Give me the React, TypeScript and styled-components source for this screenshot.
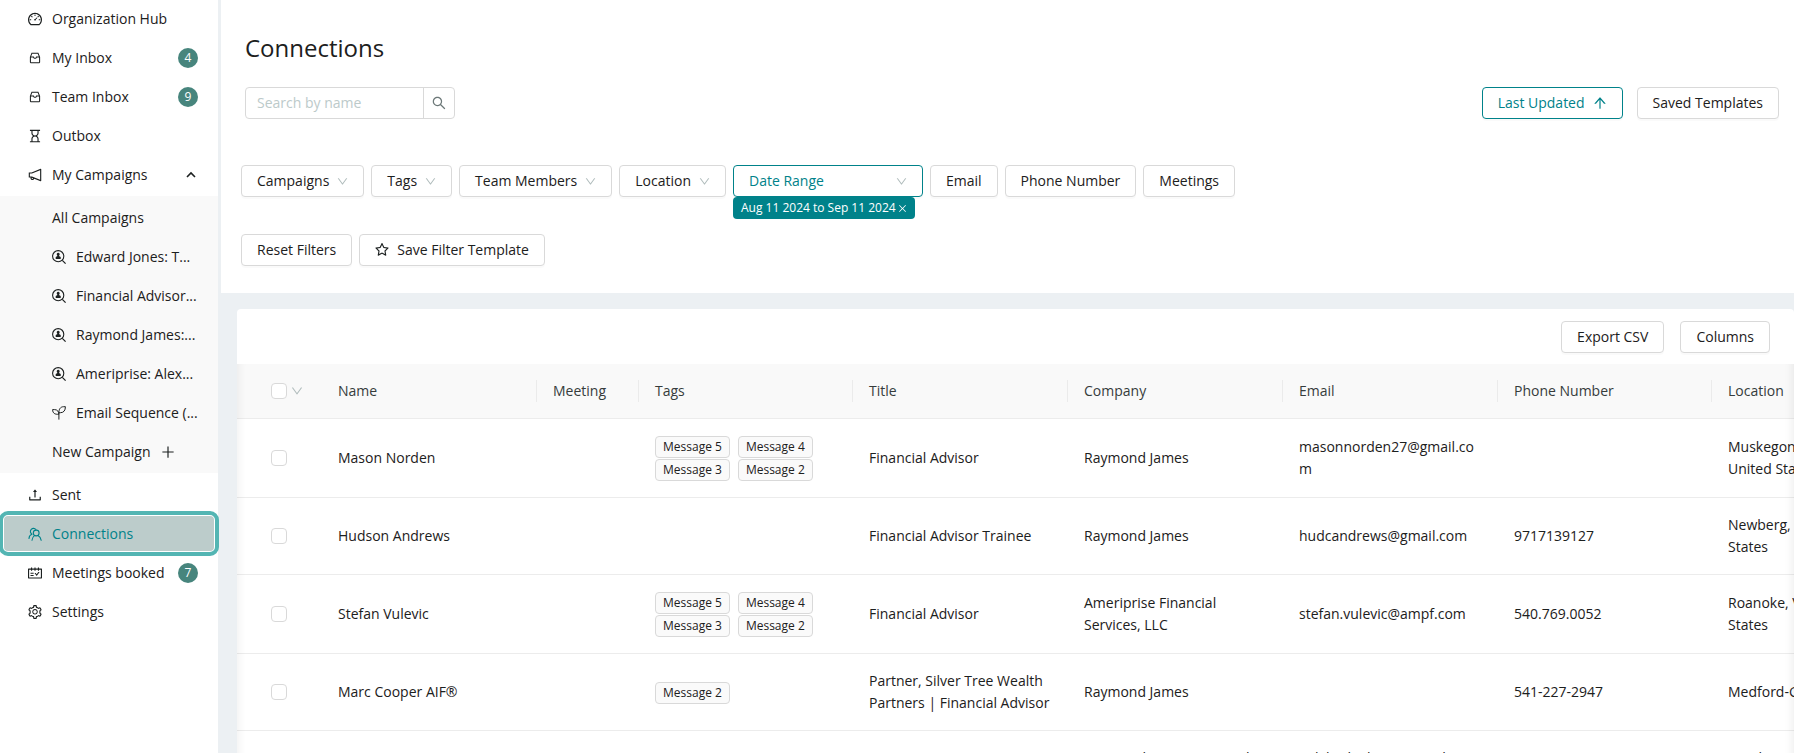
import React from "react";
import styled, { createGlobalStyle, css } from "styled-components";
import {
  AiOutlineDashboard, AiOutlineInbox, AiOutlineHourglass, AiOutlineNotification, AiOutlinePlus,
  AiOutlineUpload, AiOutlineSchedule, AiOutlineSetting, AiOutlineSearch, AiOutlineStar,
  AiOutlineArrowUp, AiOutlineDown, AiOutlineClose,
} from "react-icons/ai";

const teal = "#00828a";
const ink = "#1c2020";
const line = "#d9d9d9";

const GlobalStyle = createGlobalStyle`
  *, *::before, *::after { box-sizing: border-box; }
  body {
    margin: 0;
    color: ${ink};
    background: #ecf0f3;
    font: 14px/22px "Open Sans", "Noto Sans", sans-serif;
  }
  button, input { font: inherit; color: inherit; }
`;

const Shell = styled.div`
  display: flex;
  height: 100vh;
  overflow: hidden;
`;

const Sidebar = styled.nav`
  flex: 0 0 218px;
  padding-top: 1px;
  background: #fff;
`;

const itemLayout = css`
  display: flex;
  align-items: center;
  gap: 10px;
  height: 35px;
  margin: 0 4px 4px;
  padding: 0 16px 0 24px;
  border-radius: 4px;
`;

const NavItem = styled.a<{ $active?: boolean }>`
  ${itemLayout}
  color: ${(p) => (p.$active ? teal : ink)};
  text-decoration: none;
  white-space: nowrap;
  ${(p) =>
    p.$active &&
    css`
      background: #bccccb;
      outline: 4px solid #53b5b3;
      outline-offset: 1px;
    `}
`;

const NavToggle = styled.button`
  ${itemLayout}
  width: calc(100% - 8px);
  padding-right: 18px;
  border: 0;
  background: none;
  text-align: left;
`;

const IconSlot = styled.span`
  display: flex;
  flex: none;
  align-items: center;
  justify-content: center;
  width: 14px;
  height: 14px;
`;

const ItemText = styled.span<{ $hug?: boolean }>`
  flex: ${(p) => (p.$hug ? "none" : "1")};
`;

const SubMenu = styled.div`
  display: flow-root;
  margin-bottom: 4px;
  padding-top: 4px;
  background: #f9f9f9;
  a { padding-left: 48px; }
`;

const Badge = styled.span`
  width: 20px;
  height: 20px;
  border-radius: 10px;
  background: #47857d;
  color: #fff;
  font-size: 12px;
  line-height: 20px;
  text-align: center;
`;

const Main = styled.main`
  flex: 1;
  min-width: 0;
  padding-left: 3px;
  overflow: auto;
  scrollbar-width: none;
`;

const Filters = styled.header`
  padding: 32px 15px 27px 20px;
  background: #fff;
`;

const Title = styled.h1`
  margin: 0 4px;
  font-size: 24px;
  line-height: 32px;
  font-weight: 400;
`;

const TopRow = styled.div`
  display: flex;
  justify-content: space-between;
  margin: 23px 0 46px 4px;
`;

const ButtonRow = styled.div<{ $gap: number }>`
  display: flex;
  align-items: flex-start;
  gap: ${(p) => p.$gap}px;
`;

const FilterStack = styled.div`
  display: grid;
  gap: 37px;
`;

const Search = styled.form`
  display: flex;
  width: 210px;
  height: 32px;
  border: 1px solid ${line};
  border-radius: 4px;
`;

const SearchInput = styled.input`
  flex: 1;
  min-width: 0;
  padding: 0 11px;
  border: 0;
  outline: 0;
  background: none;
  &::placeholder { color: #bccaca; opacity: 1; }
`;

const SearchButton = styled.button`
  display: flex;
  align-items: center;
  justify-content: center;
  width: 31px;
  padding: 0;
  border: 0;
  border-left: 1px solid ${line};
  background: none;
  color: #6c7878;
`;

const Button = styled.button<{ $active?: boolean; $wide?: boolean }>`
  display: inline-flex;
  align-items: center;
  justify-content: ${(p) => (p.$wide ? "space-between" : "center")};
  gap: 8px;
  width: ${(p) => (p.$wide ? "190px" : "auto")};
  height: 32px;
  padding: 0 15px;
  border: 1px solid ${(p) => (p.$active ? teal : line)};
  border-radius: 4px;
  background: #fff;
  color: ${(p) => (p.$active ? teal : ink)};
  box-shadow: 0 2px 0 rgba(0, 0, 0, 0.02);
  white-space: nowrap;
`;

/* The icon set keeps a margin round each glyph; this view box trims it. */
const trimmed = "64 64 896 896";

const Caret = styled(AiOutlineDown).attrs({ viewBox: trimmed })`
  color: #b0bcbc;
`;

const DateFilter = styled.div`
  position: relative;
`;

const DateTag = styled.button`
  position: absolute;
  top: 100%;
  left: 0;
  display: flex;
  align-items: center;
  gap: 2px;
  height: 22px;
  padding: 0 8px;
  border: 0;
  border-radius: 4px;
  background: ${teal};
  color: #fff;
  font-size: 12px;
  line-height: 22px;
  font-weight: 500;
  white-space: nowrap;
`;

const Card = styled.section`
  margin: 16px 0 0 16px;
  border-radius: 4px 4px 0 0;
  background: #fff;
`;

const Toolbar = styled.div`
  display: flex;
  justify-content: flex-end;
  gap: 16px;
  padding: 12px 24px 11px;
`;

const TableFrame = styled.div`
  position: relative;
  &::before, &::after {
    content: "";
    position: absolute;
    top: 0;
    bottom: 0;
    width: 10px;
    pointer-events: none;
  }
  &::before { left: 0; box-shadow: inset 10px 0 8px -8px rgba(0, 0, 0, 0.06); }
  &::after { right: 0; box-shadow: inset -10px 0 8px -8px rgba(0, 0, 0, 0.07); }
`;

const Scroller = styled.div`
  overflow-x: auto;
  scrollbar-width: none;
`;

const Table = styled.table`
  table-layout: fixed;
  width: 1690px;
  min-width: 100%;
  border-collapse: separate;
  border-spacing: 0;
`;

const Col = styled.col<{ $w: number }>`
  width: ${(p) => p.$w}px;
`;

const HeadCell = styled.th<{ $divider?: boolean }>`
  padding: 16px;
  border-bottom: 1px solid #ececec;
  background: ${(p) =>
    p.$divider
      ? "linear-gradient(#ebebeb, #ebebeb) right center / 1px 22px no-repeat #f9f9f9"
      : "#f9f9f9"};
  color: #363c3c;
  font-weight: 400;
  text-align: left;
`;

const Cell = styled.td`
  padding: 16px;
  border-bottom: 1px solid #ececec;
  overflow-wrap: anywhere;
  vertical-align: middle;
`;

const CheckWrap = styled.div`
  display: flex;
  align-items: center;
  gap: 4px;
  padding-left: 18px;
`;

const Checkbox = styled.input.attrs({ type: "checkbox" })`
  appearance: none;
  flex: none;
  width: 16px;
  height: 16px;
  margin: 0;
  border: 1px solid ${line};
  border-radius: 4px;
  background: #fff;
`;

const TagList = styled.div`
  display: flex;
  flex-wrap: wrap;
  gap: 1px 8px;
  padding-top: 1px;
`;

const Tag = styled.span`
  height: 22px;
  padding: 0 7px;
  border: 1px solid ${line};
  border-radius: 4px;
  background: #fafafa;
  font-size: 12px;
  line-height: 20px;
  white-space: nowrap;
`;

const PersonSearchIcon = () => (
  <svg width="14" height="14" viewBox="0 0 14 14" fill="none" stroke="currentColor" aria-hidden="true">
    <circle cx="6.2" cy="6.2" r="5.6" strokeWidth="1.1" />
    <path d="M10.3 10.3 13.6 13.6" strokeWidth="1.2" />
    <path d="M6.2 2.800a1.500 1.500 0 0 1 1 2.600l-.2.600 1.700 1v1.900H3.700V7l1.700-1-.2-.6a1.500 1.500 0 0 1 1-2.600Z" fill="currentColor" stroke="none" />
  </svg>
);

const SproutIcon = () => (
  <svg width="14" height="14" viewBox="0 0 14 14" fill="none" stroke="currentColor" strokeLinejoin="round" aria-hidden="true">
    <path d="M.6 3.600H2.600C5.200 3.600 6.800 5.400 6.900 8.200 3 8.700 .6 7.200 .6 3.600Z" />
    <path d="M13.400 .7H11.600C8.400 .7 6.900 3.200 6.900 6.700H8.400C11.800 6.700 13.400 4.400 13.400 .7Z" />
    <path d="M6.900 6.700V13.600" />
  </svg>
);

const PeopleIcon = () => (
  <svg width="14" height="14" viewBox="0 0 14 14" fill="none" stroke="currentColor" strokeWidth="1.1" strokeLinecap="round" aria-hidden="true">
    <path d="M3.600 6.900A3.100 3.100 0 1 1 7.900 2.500" />
    <circle cx="8.200" cy="6" r="2.900" />
    <path d="M1 11.500C1.100 9.300 2.100 7.800 3.900 7.200M4 13.300C4.200 11.300 5 9.700 6.400 8.600M10 8.600C11.700 9.500 12.800 11 13.200 13.300" />
  </svg>
);

const ChevronUp = () => (
  <svg width="10" height="10" viewBox="0 0 10 10" fill="none" stroke="currentColor" strokeWidth="1.600" aria-hidden="true">
    <path d="M1 7 5 3 9 7" />
  </svg>
);

type Icon = React.ComponentType<{ size?: number; viewBox?: string }>;
type Link = { icon: Icon; label: string; count?: number; active?: boolean };

const InboxIcon = () => <AiOutlineInbox size={14} />;

const topLinks: Link[] = [
  { icon: AiOutlineDashboard, label: "Organization Hub" },
  { icon: InboxIcon, label: "My Inbox", count: 4 },
  { icon: InboxIcon, label: "Team Inbox", count: 9 },
  { icon: AiOutlineHourglass, label: "Outbox" },
];

const campaigns: Link[] = [
  { icon: PersonSearchIcon, label: "Edward Jones: T..." },
  { icon: PersonSearchIcon, label: "Financial Advisor..." },
  { icon: PersonSearchIcon, label: "Raymond James:..." },
  { icon: PersonSearchIcon, label: "Ameriprise: Alex..." },
  { icon: SproutIcon, label: "Email Sequence (..." },
];

const bottomLinks: Link[] = [
  { icon: AiOutlineUpload, label: "Sent" },
  { icon: PeopleIcon, label: "Connections", active: true },
  { icon: AiOutlineSchedule, label: "Meetings booked", count: 7 },
  { icon: AiOutlineSetting, label: "Settings" },
];

const SideLink = ({ icon: Glyph, label, count, active }: Link) => (
  <NavItem href="#" $active={active} aria-current={active ? "page" : undefined}>
    <IconSlot><Glyph size={14} viewBox={trimmed} /></IconSlot>
    <ItemText>{label}</ItemText>
    {count !== undefined && <Badge>{count}</Badge>}
  </NavItem>
);

const columns = [
  { label: "Name", width: 215 },
  { label: "Meeting", width: 102 },
  { label: "Tags", width: 214 },
  { label: "Title", width: 215 },
  { label: "Company", width: 215 },
  { label: "Email", width: 215 },
  { label: "Phone Number", width: 214 },
  { label: "Location", width: 215 },
];

type Person = {
  name: string; tags: string[]; title: string; company: string; email: string; phone: string; location: string;
};

const people: Person[] = [
  { name: "Mason Norden", tags: ["Message 5", "Message 4", "Message 3", "Message 2"], title: "Financial Advisor", company: "Raymond James", email: "masonnorden27@gmail.com", phone: "", location: "Muskegon, Michigan, United States" },
  { name: "Hudson Andrews", tags: [], title: "Financial Advisor Trainee", company: "Raymond James", email: "hudcandrews@gmail.com", phone: "9717139127", location: "Newberg, Oregon, United States" },
  { name: "Stefan Vulevic", tags: ["Message 5", "Message 4", "Message 3", "Message 2"], title: "Financial Advisor", company: "Ameriprise Financial Services, LLC", email: "stefan.vulevic@ampf.com", phone: "540.769.0052", location: "Roanoke, Virginia, United States" },
  { name: "Marc Cooper AIF®", tags: ["Message 2"], title: "Partner, Silver Tree Wealth Partners | Financial Advisor", company: "Raymond James", email: "", phone: "541-227-2947", location: "Medford-Grants Pass Area" },
  { name: "", tags: [], title: "", company: "Raymond James Financial Services, Inc.", email: "rick.hedrick@raymondjames.com", phone: "", location: "Bend, Oregon, United States" },
];

export default function App() {
  return (
    <>
      <GlobalStyle />
      <Shell>
        <Sidebar aria-label="Main">
          {topLinks.map((l) => <SideLink key={l.label} {...l} />)}
          <NavToggle aria-expanded="true">
            <IconSlot><AiOutlineNotification size={14} viewBox={trimmed} /></IconSlot>
            <ItemText>My Campaigns</ItemText>
            <ChevronUp />
          </NavToggle>
          <SubMenu>
            <NavItem href="#">All Campaigns</NavItem>
            {campaigns.map((l) => <SideLink key={l.label} {...l} />)}
            <NavItem href="#">
              <ItemText $hug>New Campaign</ItemText>
              <AiOutlinePlus size={14} viewBox={trimmed} />
            </NavItem>
          </SubMenu>
          {bottomLinks.map((l) => <SideLink key={l.label} {...l} />)}
        </Sidebar>
        <Main>
          <Filters>
            <Title>Connections</Title>
            <TopRow>
              <Search onSubmit={(e) => e.preventDefault()}>
                <SearchInput type="text" placeholder="Search by name" aria-label="Search by name" />
                <SearchButton aria-label="Search"><AiOutlineSearch size={14} viewBox={trimmed} /></SearchButton>
              </Search>
              <ButtonRow $gap={14}>
                <Button $active>Last Updated <AiOutlineArrowUp size={14} viewBox={trimmed} /></Button>
                <Button>Saved Templates</Button>
              </ButtonRow>
            </TopRow>
            <FilterStack>
              <ButtonRow $gap={7}>
                {["Campaigns", "Tags", "Team Members", "Location"].map((label) => (
                  <Button key={label}>{label} <Caret size={11} /></Button>
                ))}
                <DateFilter>
                  <Button $active $wide>Date Range <Caret size={11} /></Button>
                  <DateTag>Aug 11 2024 to Sep 11 2024 <AiOutlineClose size={9} viewBox={trimmed} /></DateTag>
                </DateFilter>
                {["Email", "Phone Number", "Meetings"].map((label) => (
                  <Button key={label}>{label}</Button>
                ))}
              </ButtonRow>
              <ButtonRow $gap={7}>
                <Button>Reset Filters</Button>
                <Button><AiOutlineStar size={14} viewBox={trimmed} /> Save Filter Template</Button>
              </ButtonRow>
            </FilterStack>
          </Filters>
          <Card>
            <Toolbar>
              <Button>Export CSV</Button>
              <Button>Columns</Button>
            </Toolbar>
            <TableFrame>
              <Scroller>
                <Table>
                  <colgroup>
                    <Col $w={85} />
                    {columns.map((c) => <Col key={c.label} $w={c.width} />)}
                  </colgroup>
                  <thead>
                    <tr>
                      <HeadCell>
                        <CheckWrap>
                          <Checkbox aria-label="Select all" />
                          <Caret size={12} />
                        </CheckWrap>
                      </HeadCell>
                      {columns.map((c) => <HeadCell key={c.label} $divider>{c.label}</HeadCell>)}
                    </tr>
                  </thead>
                  <tbody>
                    {people.map((p, i) => (
                      <tr key={i}>
                        <Cell><CheckWrap><Checkbox aria-label={p.name ? `Select ${p.name}` : "Select row"} /></CheckWrap></Cell>
                        <Cell>{p.name}</Cell>
                        <Cell />
                        <Cell>{p.tags.length > 0 && <TagList>{p.tags.map((t) => <Tag key={t}>{t}</Tag>)}</TagList>}</Cell>
                        <Cell>{p.title}</Cell>
                        <Cell>{p.company}</Cell>
                        <Cell>{p.email}</Cell>
                        <Cell>{p.phone}</Cell>
                        <Cell>{p.location}</Cell>
                      </tr>
                    ))}
                  </tbody>
                </Table>
              </Scroller>
            </TableFrame>
          </Card>
        </Main>
      </Shell>
    </>
  );
}
